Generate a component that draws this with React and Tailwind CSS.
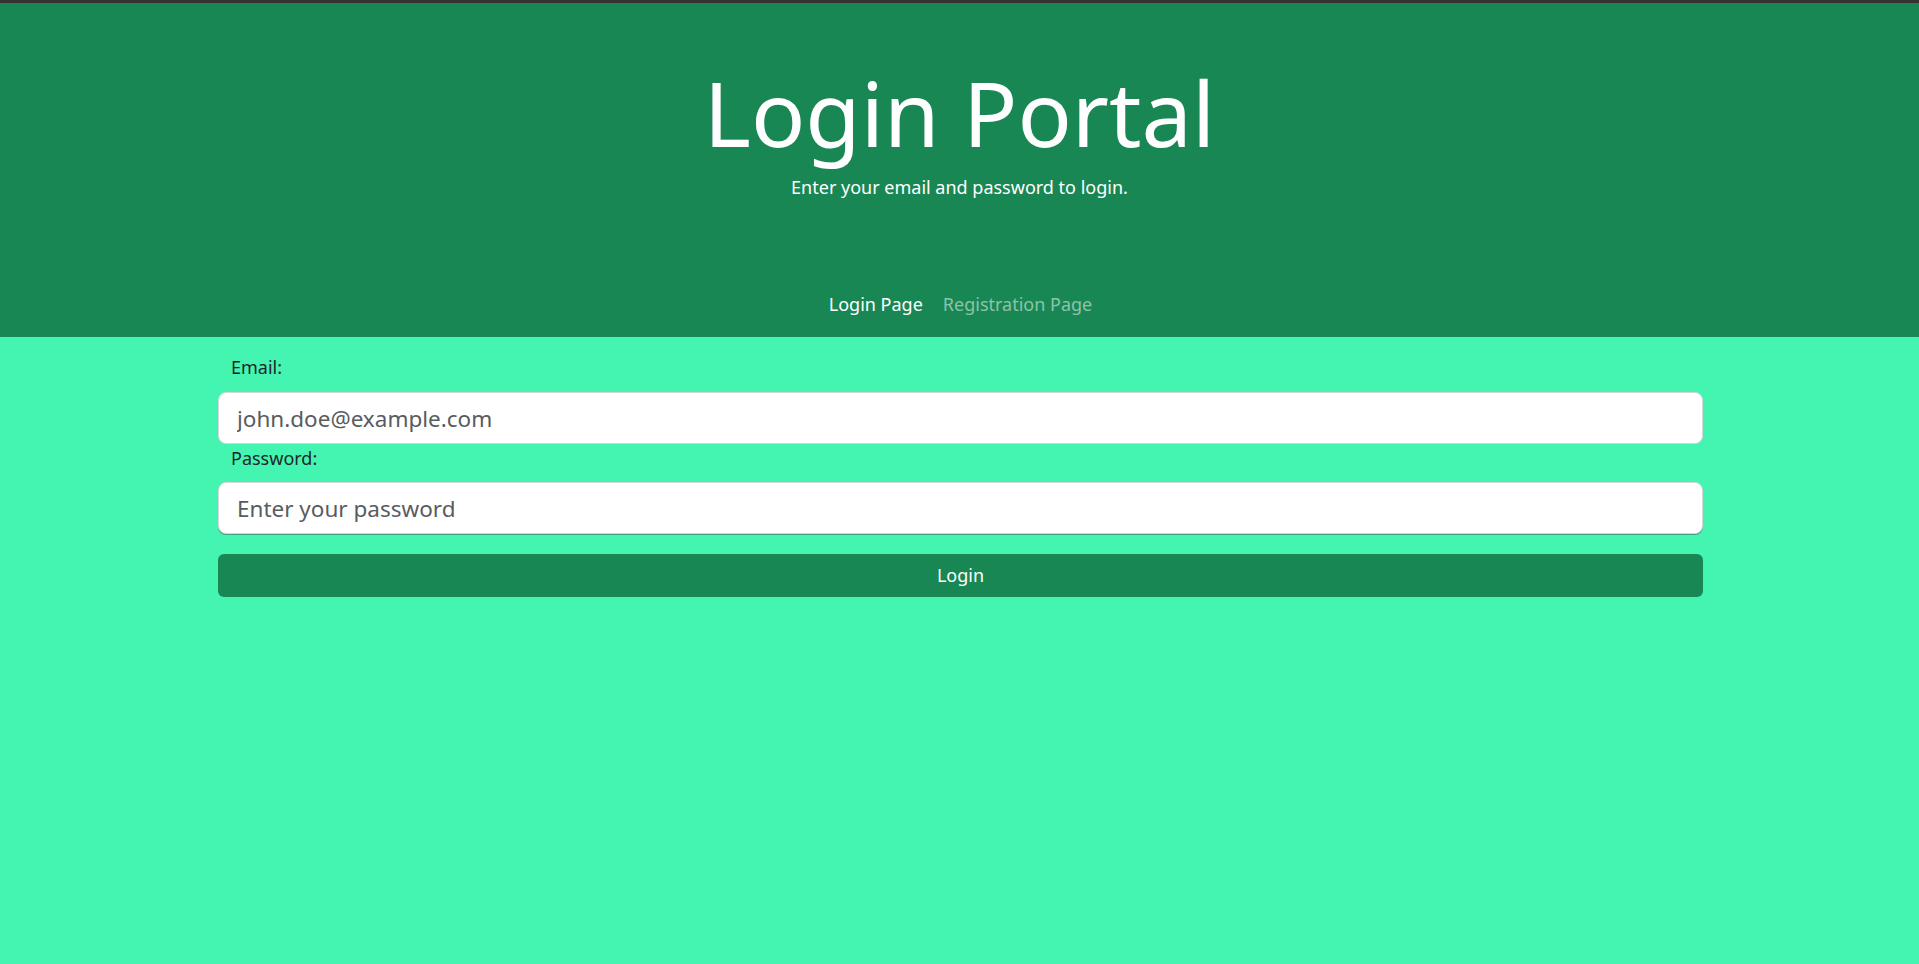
import React from "react";

export default function App() {
  return (
    <div className="min-h-screen bg-[#43f5b1] font-['Noto_Sans',sans-serif]">
      <header className="border-t-[3px] border-[#333333] bg-[#198754] text-white">
        <div className="flex flex-col items-center pt-[64px]">
          <h1 className="text-[90px] leading-none font-normal">Login Portal</h1>
          <p className="mt-[16px] text-[18px] leading-[28px]">Enter your email and password to login.</p>
        </div>
        <nav className="mt-[89px] flex justify-center gap-[20px] pb-[19px] pl-[2px] text-[18px] leading-[28px]">
          <a href="#" className="text-white">Login Page</a>
          <a href="#" className="text-white/50">Registration Page</a>
        </nav>
      </header>

      <main className="ml-[218px] mr-[216px] pt-[16px]">
        <form className="flex flex-col" onSubmit={(e) => e.preventDefault()}>
          <label className="pl-[13px] text-[18px] leading-[28px] text-[#212529] mb-[11px]">Email:</label>
          <input
            type="email"
            placeholder="john.doe@example.com"
            className="h-[52px] rounded-[8px] border border-[#d6d6d6] bg-white px-[18px] text-[22.5px] text-[#595c5f] placeholder:text-[#595c5f] outline-none"
          />
          <label className="pl-[13px] text-[18px] leading-[28px] text-[#212529] mb-[10px]">Password:</label>
          <input
            type="password"
            placeholder="Enter your password"
            className="h-[52px] rounded-[8px] border border-[#d6d6d6] bg-white px-[18px] text-[22.5px] text-[#595c5f] placeholder:text-[#595c5f] outline-none shadow-[0_1px_0_rgba(60,110,95,0.6)]"
          />
          <button
            type="submit"
            className="mt-[20px] h-[43px] rounded-[6px] bg-[#198754] text-[18px] text-white"
          >
            Login
          </button>
        </form>
      </main>
    </div>
  );
}
